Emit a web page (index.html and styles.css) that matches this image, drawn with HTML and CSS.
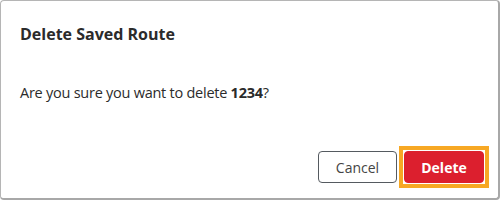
FILE: index.html
```html
<!DOCTYPE html>
<html lang="en">
<head>
<meta charset="utf-8">
<title>Delete Saved Route</title>
<link rel="stylesheet" href="styles.css">
</head>
<body>
<div class="dialog" role="dialog" aria-labelledby="dlg-title">
  <h2 class="dialog-title" id="dlg-title">Delete Saved Route</h2>
  <p class="dialog-body">Are you sure you want to delete <strong>1234</strong>?</p>
  <div class="dialog-actions">
    <button class="btn btn-secondary" type="button">Cancel</button>
    <button class="btn btn-danger is-focused" type="button">Delete</button>
  </div>
</div>
</body>
</html>
```
FILE: styles.css
```css
html, body {
  margin: 0;
  padding: 0;
  background: #ffffff;
}
body {
  font-family: "Open Sans", "Noto Sans", sans-serif;
  color: #333333;
}
.dialog {
  box-sizing: border-box;
  width: 500px;
  height: 200px;
  border: 1px solid #b5b5b5;
  border-right: 2px solid #a8a8a8;
  border-bottom: 2px solid #a8a8a8;
  border-radius: 4px;
  background: #ffffff;
  display: flex;
  flex-direction: column;
  padding: 0 14px 0 19px;
}
.dialog-title {
  margin: 19px 0 0;
  font-size: 16px;
  font-weight: 700;
  line-height: 28px;
  color: #2b2b2b;
}
.dialog-body {
  margin: 35px 0 0;
  font-size: 14.5px;
  letter-spacing: -0.25px;
  line-height: 20px;
  color: #2b2b2b;
}
.dialog-body strong {
  font-weight: 700;
}
.dialog-actions {
  margin-top: auto;
  margin-bottom: 15px;
  display: flex;
  justify-content: flex-end;
  gap: 7px;
}
.btn {
  box-sizing: border-box;
  height: 32px;
  padding: 0 16px;
  border-radius: 4px;
  font-family: "Open Sans", "Noto Sans", sans-serif;
  font-size: 14px;
  cursor: pointer;
}
.btn-secondary {
  width: 79px;
  background: #ffffff;
  border: 1px solid #555a60;
  color: #444;
}
.btn-danger {
  width: 80px;
  background: #dc1f2e;
  border: 1px solid #dc1f2e;
  color: #ffffff;
  font-weight: 700;
}
.is-focused {
  position: relative;
  outline: none;
}
.is-focused::after {
  content: "";
  position: absolute;
  top: -6px;
  left: -6px;
  right: -6px;
  bottom: -6px;
  border: 4px solid #f7a824;
  pointer-events: none;
}
```
